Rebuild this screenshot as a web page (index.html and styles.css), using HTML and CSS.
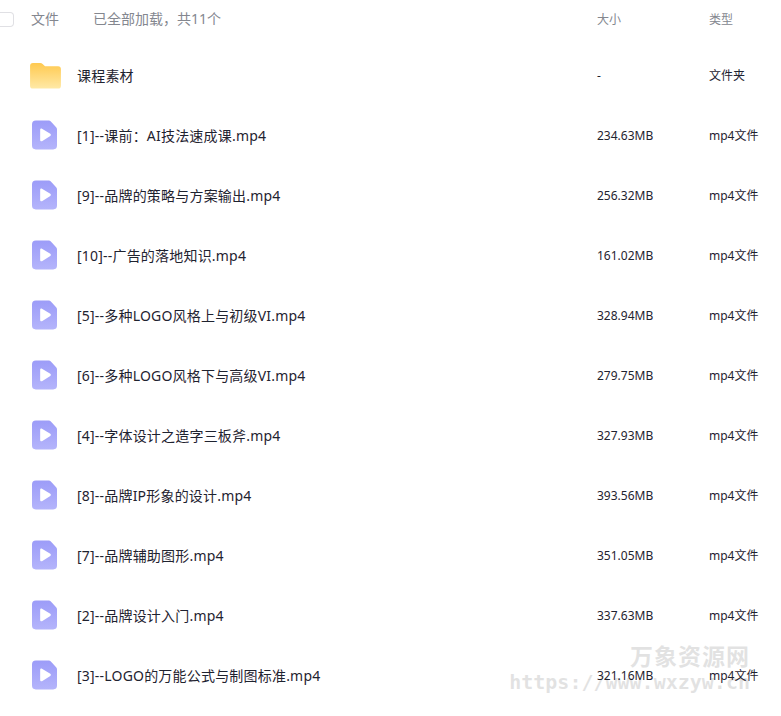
FILE: index.html
```html
<!DOCTYPE html>
<html lang="zh">
<head>
<meta charset="utf-8">
<title>文件列表</title>
<link rel="stylesheet" href="styles.css">
</head>
<body>
<svg class="defs" width="0" height="0" aria-hidden="true">
  <defs>
    <linearGradient id="fg" x1="0" y1="0" x2="0" y2="1">
      <stop offset="0" stop-color="#ffc94f"/>
      <stop offset="1" stop-color="#ffe9a6"/>
    </linearGradient>
    <linearGradient id="vg" x1="0" y1="0" x2="0" y2="1">
      <stop offset="0" stop-color="#9c9cf8"/>
      <stop offset="1" stop-color="#b4b4fb"/>
    </linearGradient>
    <symbol id="folder" viewBox="0 0 32 28">
      <path d="M3 1h7.5c1 0 1.800.4 2.500 1.100L15.500 4.500H29a3 3 0 0 1 3 3V24.500a3 3 0 0 1-3 3H3a3 3 0 0 1-3-3V4a3 3 0 0 1 3-3z" fill="url(#fg)"/>
    </symbol>
    <symbol id="video" viewBox="0 0 26 30">
      <path d="M4 0h13.500c.8 0 1.500.3 2.100.9l5.500 6c.6.600.9 1.300.9 2.100V26a4 4 0 0 1-4 4H4a4 4 0 0 1-4-4V4a4 4 0 0 1 4-4z" fill="url(#vg)"/>
      <path d="M8.500 9.500c0-1 1-1.600 1.900-1.100l8.600 5.400c.8.500.8 1.700 0 2.200l-8.600 5.400c-.9.500-1.900-.100-1.900-1.100z" fill="#fff"/>
    </symbol>
  </defs>
</svg>
<main class="list">
  <div class="head">
    <span class="check"></span>
    <span class="head-file">文件</span>
    <span class="head-count">已全部加载，共11个</span>
    <span class="col-size">大小</span>
    <span class="col-type">类型</span>
  </div>
  <div class="row">
    <svg class="icon icon-folder"><use href="#folder"/></svg>
    <span class="name">课程素材</span><span class="col-size">-</span><span class="col-type">文件夹</span>
  </div>
  <div class="row">
    <svg class="icon icon-video"><use href="#video"/></svg>
    <span class="name">[1]--课前：AI技法速成课.mp4</span><span class="col-size">234.63MB</span><span class="col-type">mp4文件</span>
  </div>
  <div class="row">
    <svg class="icon icon-video"><use href="#video"/></svg>
    <span class="name">[9]--品牌的策略与方案输出.mp4</span><span class="col-size">256.32MB</span><span class="col-type">mp4文件</span>
  </div>
  <div class="row">
    <svg class="icon icon-video"><use href="#video"/></svg>
    <span class="name">[10]--广告的落地知识.mp4</span><span class="col-size">161.02MB</span><span class="col-type">mp4文件</span>
  </div>
  <div class="row">
    <svg class="icon icon-video"><use href="#video"/></svg>
    <span class="name">[5]--多种LOGO风格上与初级VI.mp4</span><span class="col-size">328.94MB</span><span class="col-type">mp4文件</span>
  </div>
  <div class="row">
    <svg class="icon icon-video"><use href="#video"/></svg>
    <span class="name">[6]--多种LOGO风格下与高级VI.mp4</span><span class="col-size">279.75MB</span><span class="col-type">mp4文件</span>
  </div>
  <div class="row">
    <svg class="icon icon-video"><use href="#video"/></svg>
    <span class="name">[4]--字体设计之造字三板斧.mp4</span><span class="col-size">327.93MB</span><span class="col-type">mp4文件</span>
  </div>
  <div class="row">
    <svg class="icon icon-video"><use href="#video"/></svg>
    <span class="name">[8]--品牌IP形象的设计.mp4</span><span class="col-size">393.56MB</span><span class="col-type">mp4文件</span>
  </div>
  <div class="row">
    <svg class="icon icon-video"><use href="#video"/></svg>
    <span class="name">[7]--品牌辅助图形.mp4</span><span class="col-size">351.05MB</span><span class="col-type">mp4文件</span>
  </div>
  <div class="row">
    <svg class="icon icon-video"><use href="#video"/></svg>
    <span class="name">[2]--品牌设计入门.mp4</span><span class="col-size">337.63MB</span><span class="col-type">mp4文件</span>
  </div>
  <div class="row">
    <svg class="icon icon-video"><use href="#video"/></svg>
    <span class="name">[3]--LOGO的万能公式与制图标准.mp4</span><span class="col-size">321.16MB</span><span class="col-type">mp4文件</span>
  </div>
</main>
<div class="watermark">
  <div class="wm-title">万象资源网</div>
  <div class="wm-url">https://www.wxzyw.cn</div>
</div>
</body>
</html>
```
FILE: styles.css
```css
html, body {
  margin: 0;
  padding: 0;
  background: #fff;
}
body {
  position: relative;
  width: 781px;
  height: 716px;
  overflow: hidden;
  font-family: "Noto Sans", "Noto Sans CJK SC", sans-serif;
  color: #1f2330;
}
.defs {
  position: absolute;
}
.list {
  display: flex;
  flex-direction: column;
}
.head {
  display: grid;
  grid-template-columns: 31px 62px 504px 112px 1fr;
  align-items: center;
  height: 38px;
  margin-bottom: 7px;
  font-size: 12px;
  color: #84878f;
}
.check {
  width: 14px;
  height: 15px;
  box-sizing: border-box;
  border: 1px solid #e0e0e4;
  border-left: 0;
  border-radius: 0 4px 4px 0;
}
.head-file,
.head-count {
  font-size: 14px;
  margin-bottom: 2px;
}
.row {
  display: grid;
  grid-template-columns: 77px 520px 112px 1fr;
  align-items: center;
  height: 60px;
  font-size: 12px;
}
.name {
  font-size: 14px;
  letter-spacing: 0.2px;
  white-space: nowrap;
}
.icon {
  display: block;
}
.icon-folder {
  width: 31px;
  height: 27px;
  margin-left: 30px;
}
.icon-video {
  width: 25px;
  height: 30px;
  margin-left: 32px;
}
.watermark {
  position: absolute;
  right: 31px;
  top: 642px;
  text-align: right;
  color: #000;
  opacity: 0.11;
  pointer-events: none;
}
.wm-title {
  font-size: 23px;
  line-height: 28px;
  font-weight: 700;
  letter-spacing: 1px;
}
.wm-url {
  font-family: "DejaVu Sans Mono", monospace;
  font-weight: 700;
  font-size: 20px;
  line-height: 24px;
}
```
